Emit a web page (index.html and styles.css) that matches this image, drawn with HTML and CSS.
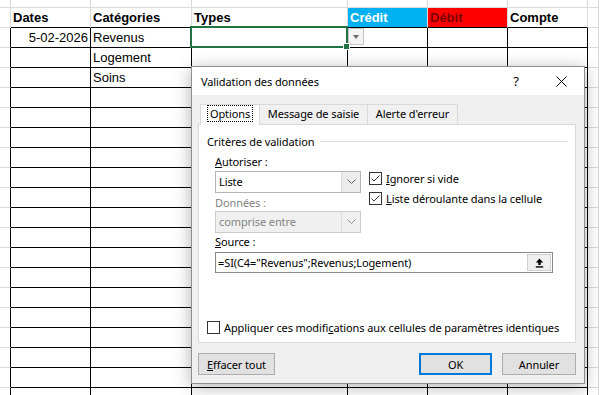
FILE: index.html
```html
<!DOCTYPE html>
<html lang="fr">
<head>
  <meta charset="UTF-8">
  <title>Validation des données</title>
  <link rel="stylesheet" href="styles.css">
</head>
<body>
  <div class="sheet" id="sheet"></div>

  <!-- Boîte de dialogue -->
  <div class="dialog">
    <div class="dlg-title">
      <span>Validation des données</span>
      <span class="help">?</span>
      <span class="close">
        <svg width="11" height="11" viewBox="0 0 11 11"><path d="M0.5 0.5 L10.5 10.5 M10.5 0.5 L0.5 10.5" stroke="#000" stroke-width="1" fill="none"/></svg>
      </span>
    </div>
    <div class="dlg-body">
      <div class="tabs">
        <div class="tab tab-options active"><span class="focus">Options</span></div>
        <div class="tab tab-message">Message de saisie</div>
        <div class="tab tab-alert">Alerte d'erreur</div>
      </div>
      <div class="panel">
        <div class="group">Critères de validation</div>
        <div class="criteria">
          <div class="left">
            <div class="lbl"><u>A</u>utoriser :</div>
            <div class="combo">
              <span class="combo-text">Liste</span>
              <span class="combo-btn">
                <svg width="9" height="6" viewBox="0 0 9 6"><path d="M0.5 0.5 L4.5 4.5 L8.5 0.5" stroke="#606060" fill="none"/></svg>
              </span>
            </div>
            <div class="lbl lbl-data disabled">Données :</div>
            <div class="combo combo-disabled">
              <span class="combo-text">comprise entre</span>
              <span class="combo-btn">
                <svg width="9" height="6" viewBox="0 0 9 6"><path d="M0.5 0.5 L4.5 4.5 L8.5 0.5" stroke="#909090" fill="none"/></svg>
              </span>
            </div>
          </div>
          <div class="right">
            <label class="check">
              <span class="cb"><svg width="11" height="11" viewBox="0 0 11 11"><path d="M1.5 5.5 L4 8 L9.5 2.5" stroke="#333" fill="none"/></svg></span>
              <span><u>I</u>gnorer si vide</span>
            </label>
            <label class="check">
              <span class="cb"><svg width="11" height="11" viewBox="0 0 11 11"><path d="M1.5 5.5 L4 8 L9.5 2.5" stroke="#333" fill="none"/></svg></span>
              <span><u>L</u>iste déroulante dans la cellule</span>
            </label>
          </div>
        </div>
        <div class="lbl lbl-source"><u>S</u>ource :</div>
        <div class="source">
          <span class="source-text">=SI(C4="Revenus";Revenus;Logement)</span>
          <span class="source-btn">
            <svg width="9" height="10" viewBox="0 0 9 10"><path d="M4.5 0.5 L0.8 4.5 H3.3 V7 H5.7 V4.5 H8.2 Z" fill="#000"/><rect x="0.8" y="8.2" width="7.4" height="1.4" fill="#000"/></svg>
          </span>
        </div>
        <label class="check apply">
          <span class="cb"></span>
          <span>Appliquer ces modifi<u>c</u>ations aux cellules de paramètres identiques</span>
        </label>
      </div>
      <div class="buttons">
        <button class="btn btn-clear"><u>E</u>ffacer tout</button>
        <button class="btn btn-ok">OK</button>
        <button class="btn btn-cancel">Annuler</button>
      </div>
    </div>
  </div>

  <script>
    const headers = ["", "Dates", "Catégories", "Types", "Crédit", "Débit", "Compte", ""];
    const data = [
      ["5-02-2026", "Revenus"],
      ["", "Logement"],
      ["", "Soins"]
    ];
    const rowCount = 19;

    function makeRow(kind, values) {
      const row = document.createElement("div");
      row.className = "row row-" + kind;
      for (let i = 0; i < 8; i++) {
        const cell = document.createElement("div");
        cell.className = "cell c" + i;
        if (i > 0 && i < 7) cell.classList.add("in");
        if (values && values[i]) cell.textContent = values[i];
        row.appendChild(cell);
      }
      return row;
    }

    const sheet = document.getElementById("sheet");
    sheet.appendChild(makeRow("top"));

    const head = makeRow("head", headers);
    head.children[4].classList.add("credit");
    head.children[5].classList.add("debit");
    sheet.appendChild(head);

    for (let r = 0; r < rowCount; r++) {
      const values = data[r] ? ["", data[r][0], data[r][1]] : null;
      const row = makeRow("data", values);
      row.children[1].classList.add("num");
      if (r === 0) {
        // cellule active avec liste déroulante
        const sel = row.children[3];
        sel.classList.add("sel");
        const drop = document.createElement("span");
        drop.className = "drop";
        sel.appendChild(drop);
      }
      sheet.appendChild(row);
    }
  </script>
</body>
</html>
```

FILE: styles.css
```css
body {
  margin: 0;
  width: 599px;
  height: 395px;
  overflow: hidden;
  position: relative;
  background: #fff;
  font-family: "Liberation Sans", Arial, sans-serif;
}

/* Feuille de calcul */
.sheet {
  display: flex;
  flex-direction: column;
}
.row {
  display: grid;
  grid-template-columns: 11px 80px 101px 156px 80px 80px 80px 1fr;
  height: 20px;
}
.row-top {
  height: 8px;
}
.cell {
  box-sizing: border-box;
  border-right: 1px solid #dadada;
  border-bottom: 1px solid #dadada;
  font-size: 13px;
  line-height: 19px;
  padding: 0 2px;
  white-space: nowrap;
  overflow: hidden;
}
.row-head .cell {
  font-weight: bold;
}
.row-head .cell.in {
  border-bottom-color: #000;
}
.row-data .cell.in {
  border-right-color: #000;
  border-bottom-color: #000;
}
.row-data .cell.c0 {
  border-right-color: #000;
}
.num {
  text-align: right;
}
.credit {
  background: #00b0f0;
  color: #fff;
}
.debit {
  background: #ff0000;
  color: #7a0000;
}

/* Cellule active */
.sel {
  position: relative;
  overflow: visible;
  z-index: 2;
}
.sel::after {
  content: "";
  position: absolute;
  top: -2px;
  left: -2px;
  right: -1px;
  bottom: -1px;
  border: 2px solid #217346;
}
.sel::before {
  content: "";
  position: absolute;
  right: -3px;
  bottom: -3px;
  width: 5px;
  height: 5px;
  background: #217346;
  border: 1px solid #fff;
  z-index: 1;
}
.drop {
  position: absolute;
  left: calc(100% + 1px);
  top: 0;
  width: 16px;
  height: 17px;
  box-sizing: border-box;
  background: #f4f4f4;
  border: 1px solid #c6c6c6;
}
.drop::after {
  content: "";
  position: absolute;
  left: 4px;
  top: 6px;
  border-left: 3.5px solid transparent;
  border-right: 3.5px solid transparent;
  border-top: 4px solid #6b6b6b;
}

/* Boîte de dialogue */
.dialog {
  position: absolute;
  left: 191px;
  top: 66px;
  width: 394px;
  box-sizing: border-box;
  border: 1px solid #8f8f8f;
  background: #f0f0f0;
  box-shadow: 0 3px 16px rgba(0, 0, 0, 0.3);
  font-family: "Noto Sans", sans-serif;
  font-size: 11px;
  letter-spacing: -0.1px;
  color: #000;
  z-index: 5;
}
.dlg-title {
  height: 28px;
  background: #fff;
  display: flex;
  align-items: center;
  padding-left: 9px;
}
.help {
  margin-left: auto;
  width: 44px;
  text-align: center;
  font-size: 13px;
}
.close {
  width: 46px;
  display: flex;
  justify-content: center;
}
.dlg-body {
  padding: 9px 8px 8px 6px;
}
.tabs {
  display: flex;
  height: 20px;
  padding-left: 2px;
}
.tab {
  box-sizing: border-box;
  height: 20px;
  border: 1px solid #d9d9d9;
  border-bottom: none;
  text-align: center;
  line-height: 18px;
  margin-left: -1px;
}
.tab-options {
  width: 60px;
  margin-left: 0;
}
.tab-message {
  width: 109px;
}
.tab-alert {
  width: 91px;
}
.tab.active {
  background: #fff;
  position: relative;
  z-index: 1;
  height: 21px;
}
.focus {
  border: 1px dotted #000;
  padding: 0 2px;
}
.panel {
  box-sizing: border-box;
  height: 219px;
  background: #fff;
  border: 1px solid #d9d9d9;
  padding: 8px 8px 7px 8px;
  display: flex;
  flex-direction: column;
}
.group {
  display: flex;
  align-items: center;
  height: 16px;
}
.group::after {
  content: "";
  flex: 1;
  border-top: 1px solid #dcdcdc;
  margin-left: 6px;
}
.criteria {
  display: flex;
  gap: 8px;
  margin: 5px 0 0 8px;
}
.left {
  width: 146px;
  display: flex;
  flex-direction: column;
}
.lbl {
  height: 16px;
  line-height: 16px;
}
.disabled {
  color: #838383;
}
.lbl-data {
  margin-top: 2px;
}
.lbl-source {
  margin: 1px 0 0 8px;
}
.combo {
  box-sizing: border-box;
  height: 22px;
  margin-top: 1px;
  border: 1px solid #b4b4b4;
  background: #fff;
  display: flex;
  align-items: stretch;
}
.lbl-data + .combo {
  margin-top: 0;
}
.combo-text {
  flex: 1;
  padding-left: 3px;
  line-height: 20px;
}
.combo-btn {
  width: 18px;
  display: flex;
  align-items: center;
  justify-content: center;
  background: #ececec;
  border-left: 1px solid #dadada;
}
.combo-disabled {
  background: #f0f0f0;
  border-color: #cccccc;
  color: #838383;
}
.combo-disabled .combo-btn {
  background: #f0f0f0;
  border-left-color: #dcdcdc;
}
.right {
  padding-top: 16px;
  display: flex;
  flex-direction: column;
  gap: 4px;
}
.check {
  display: flex;
  align-items: center;
  gap: 4px;
  height: 16px;
  white-space: nowrap;
}
.cb {
  box-sizing: border-box;
  width: 13px;
  height: 13px;
  border: 1px solid #333;
  background: #fff;
  display: flex;
  flex-shrink: 0;
}
.source {
  box-sizing: border-box;
  width: 338px;
  height: 21px;
  margin: 2px 0 0 8px;
  border: 1px solid #8a8a8a;
  display: flex;
  align-items: center;
}
.source-text {
  flex: 1;
  padding-left: 2px;
}
.source-btn {
  box-sizing: border-box;
  width: 24px;
  height: 17px;
  margin-right: 1px;
  background: #f0f0f0;
  border: 1px solid #cfcfcf;
  display: flex;
  align-items: center;
  justify-content: center;
}
.apply {
  margin-top: auto;
}
.buttons {
  display: flex;
  gap: 10px;
  margin-top: 10px;
}
.btn {
  box-sizing: border-box;
  height: 22px;
  padding: 0;
  font-family: inherit;
  font-size: inherit;
  letter-spacing: inherit;
  color: #000;
  background: #e1e1e1;
  border: 1px solid #adadad;
}
.btn-clear {
  width: 77px;
}
.btn-ok {
  width: 73px;
  margin-left: auto;
  border: 2px solid #0078d7;
}
.btn-cancel {
  width: 74px;
}
```
